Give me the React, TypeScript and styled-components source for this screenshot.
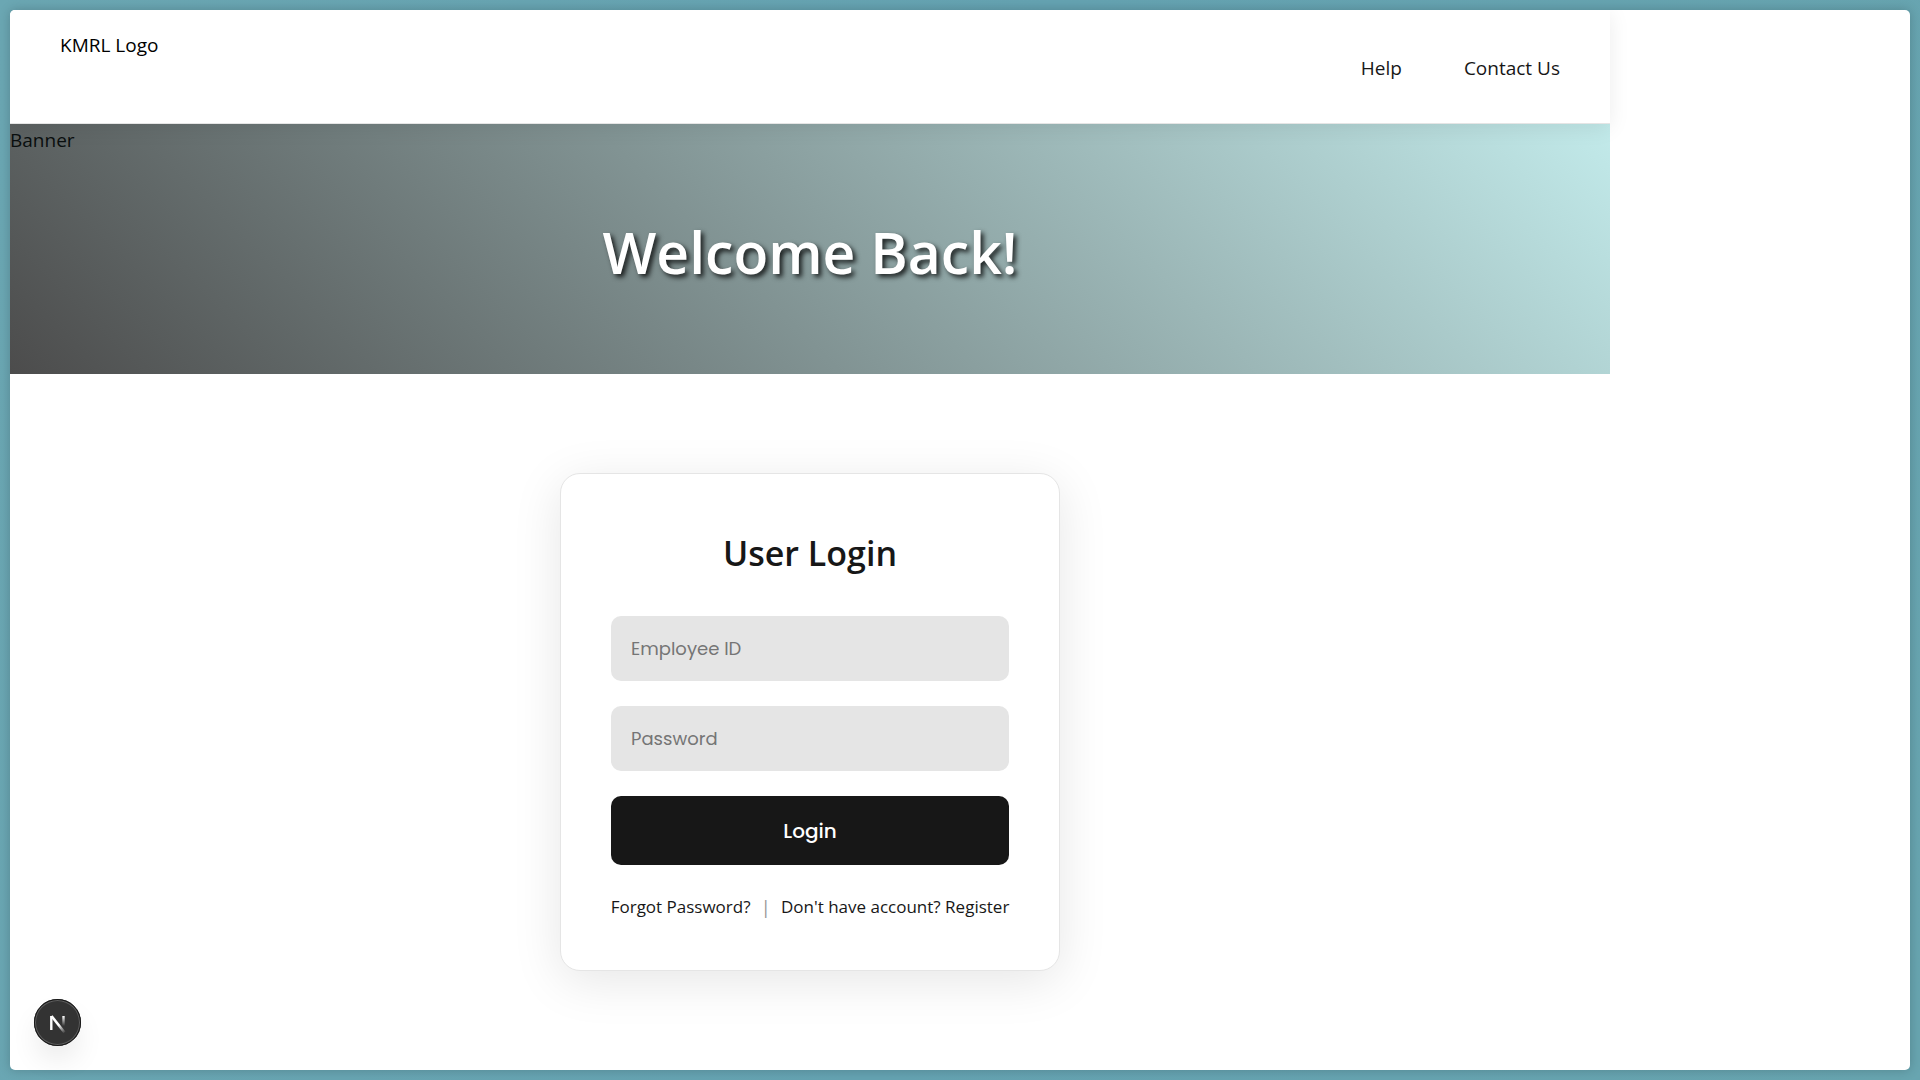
import React from "react";
import styled, { createGlobalStyle } from "styled-components";

const uiFont = `"Segoe UI", "Open Sans", "Noto Sans", sans-serif`;
const formFont = `Poppins, Inter, "Open Sans", sans-serif`;

const GlobalStyle = createGlobalStyle`
  *, *::before, *::after { box-sizing: border-box; }
  body {
    margin: 0;
    font-family: ${uiFont};
    font-size: 19px;
    line-height: 32px;
    color: #000;
    background: #66a4b3;
  }
`;

const Backdrop = styled.div`
  display: flex;
  min-height: 100vh;
  padding: 10px;
  background: linear-gradient(100deg, #6ba7b3, #65a3b2 50%, #68a5b0);
`;

const Frame = styled.div`
  flex: 1;
  min-width: 0;
  overflow: hidden;
  border-radius: 5px;
  background: #fff;
  box-shadow: 0 0 12px rgba(0, 0, 0, 0.2);
`;

const Page = styled.div`
  display: flex;
  flex-direction: column;
  max-width: 1600px;
`;

const Header = styled.header`
  position: relative;
  z-index: 1;
  display: flex;
  justify-content: space-between;
  min-height: 114px;
  padding: 19px 50px 17px;
  border-bottom: 1px solid #e5e5e5;
  background: #fff;
  box-shadow: 0 4px 20px rgba(0, 0, 0, 0.08);
`;

const Nav = styled.nav`
  display: flex;
  align-items: center;
  gap: 62px;
`;

const TextLink = styled.a`
  color: #171717;
  text-decoration: none;
`;

const Banner = styled.section`
  display: grid;
  min-height: 250px;
  background: linear-gradient(45deg, #4c4c4c, #c2eaea);

  > * {
    grid-area: 1 / 1;
  }
`;

const BannerLabel = styled.span`
  color: #0a0f0f;
`;

const BannerTitle = styled.h1`
  place-self: center;
  margin: 0;
  padding-top: 6px;
  color: #fff;
  font-size: 57px;
  font-weight: 600;
  line-height: 80px;
  text-shadow: 3px 3px 5px rgba(0, 0, 0, 0.8);
`;

const Main = styled.main`
  display: flex;
  justify-content: center;
  padding: 99px 20px;
`;

const Card = styled.form`
  display: flex;
  flex-direction: column;
  gap: 25px;
  width: 100%;
  max-width: 500px;
  padding: 50px;
  border: 1px solid #e5e5e5;
  border-radius: 20px;
  background: #fff;
  box-shadow: 0 10px 50px rgba(0, 0, 0, 0.1);
`;

const CardTitle = styled.h2`
  margin: 0 0 8px;
  color: #171717;
  font-size: 34px;
  font-weight: 600;
  line-height: 59px;
  text-align: center;
`;

const Field = styled.input`
  width: 100%;
  height: 65px;
  padding: 0 20px;
  border: 0;
  border-radius: 10px;
  background: #e5e5e5;
  color: #171717;
  font-family: ${formFont};
  font-size: 18px;

  &::placeholder {
    color: #757575;
    opacity: 1;
  }
`;

const SubmitButton = styled.button`
  height: 69px;
  border: 0;
  border-radius: 10px;
  background: #171717;
  color: #fff;
  font-family: ${formFont};
  font-size: 20px;
  font-weight: 500;
  cursor: pointer;
`;

const CardLinks = styled.div`
  display: flex;
  justify-content: center;
  gap: 10px;
  padding-top: 4px;
  font-size: 17px;
  line-height: 26px;
  white-space: nowrap;
`;

const Divider = styled.span`
  color: #999;
  font-size: 19px;
`;

const DevBadge = styled.button`
  position: fixed;
  left: 34px;
  bottom: 34px;
  z-index: 2;
  display: grid;
  place-items: center;
  width: 47px;
  height: 47px;
  padding: 0;
  border: 0;
  border-radius: 50%;
  background: #333;
  box-shadow: 0 0 0 1px #171717 inset, 0 0 0 2px #5c5c5c inset, 0 16px 32px -8px rgba(0, 0, 0, 0.16);
  cursor: pointer;
`;

const NextMark = () => (
  <svg width="47" height="47" viewBox="0 0 47 47" fill="none" aria-hidden="true">
    <defs>
      <linearGradient id="diag" x1="25" y1="26" x2="31" y2="34" gradientUnits="userSpaceOnUse">
        <stop stopColor="#fff" />
        <stop offset="1" stopColor="#fff" stopOpacity="0" />
      </linearGradient>
      <linearGradient id="stem" x1="0" y1="17" x2="0" y2="27" gradientUnits="userSpaceOnUse">
        <stop stopColor="#fff" />
        <stop offset="1" stopColor="#fff" stopOpacity="0" />
      </linearGradient>
    </defs>
    <path d="M17.500 17L30.500 33.500" stroke="url(#diag)" strokeWidth="2.6" />
    <path d="M17.300 31V17" stroke="#fff" strokeWidth="2.4" />
    <path d="M29.500 17V27" stroke="url(#stem)" strokeWidth="2.4" />
  </svg>
);

export default function App() {
  return (
    <>
      <GlobalStyle />
      <Backdrop>
        <Frame>
          <Page>
            <Header>
              <span>KMRL Logo</span>
              <Nav>
                <TextLink href="#help">Help</TextLink>
                <TextLink href="#contact">Contact Us</TextLink>
              </Nav>
            </Header>
            <Banner>
              <BannerLabel>Banner</BannerLabel>
              <BannerTitle>Welcome Back!</BannerTitle>
            </Banner>
            <Main>
              <Card onSubmit={(event: React.FormEvent) => event.preventDefault()}>
                <CardTitle>User Login</CardTitle>
                <Field type="text" placeholder="Employee ID" aria-label="Employee ID" />
                <Field type="password" placeholder="Password" aria-label="Password" />
                <SubmitButton type="submit">Login</SubmitButton>
                <CardLinks>
                  <TextLink href="#forgot">Forgot Password?</TextLink>
                  <Divider>|</Divider>
                  <TextLink href="#register">Don't have account? Register</TextLink>
                </CardLinks>
              </Card>
            </Main>
          </Page>
        </Frame>
      </Backdrop>
      <DevBadge type="button" aria-label="Open Next.js Dev Tools">
        <NextMark />
      </DevBadge>
    </>
  );
}
